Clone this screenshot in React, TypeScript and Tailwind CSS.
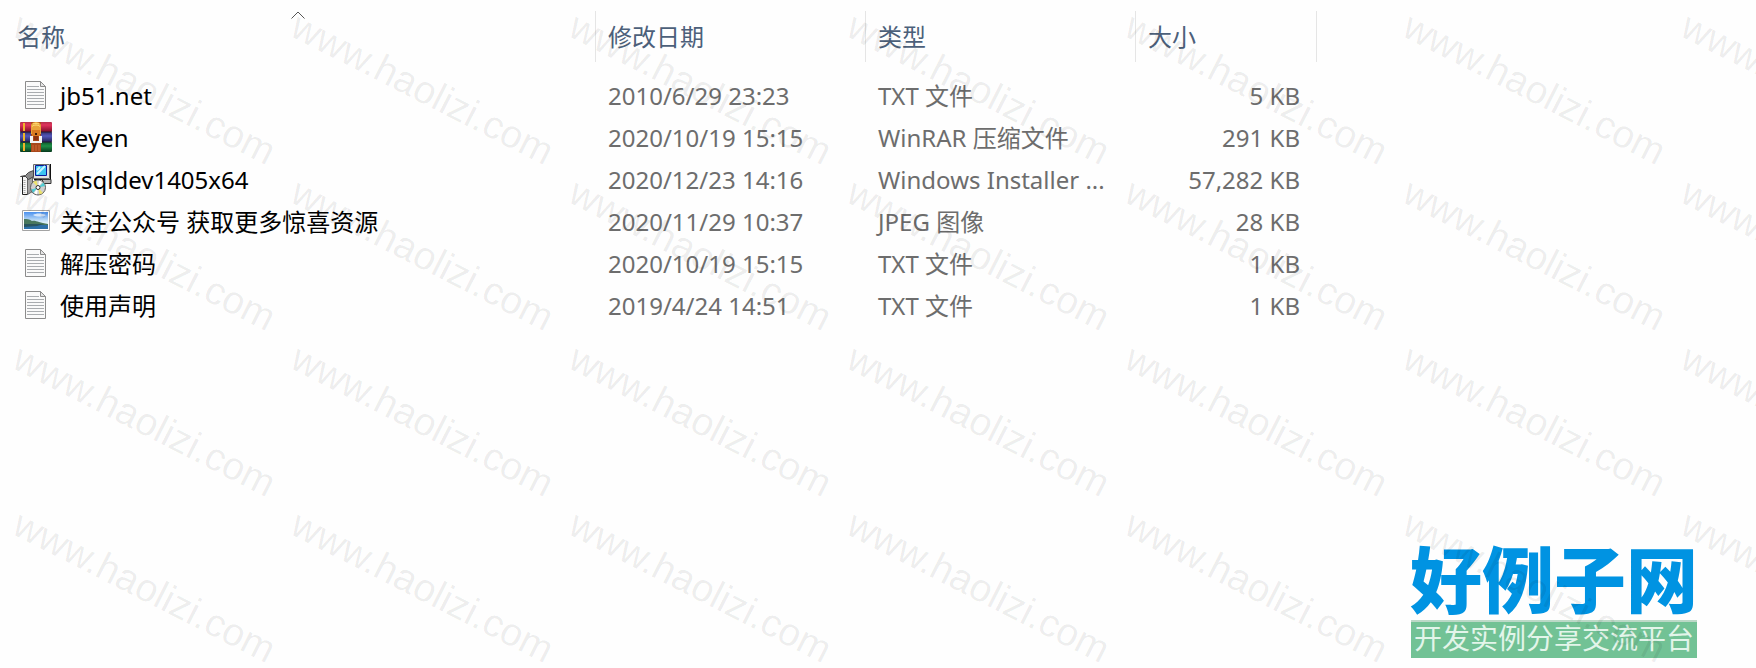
import type { ReactNode } from 'react';

type FileKind = 'text' | 'rar' | 'installer' | 'image';

interface FileItem {
  name: string;
  kind: FileKind;
  modified: string;
  type: string;
  size: string;
}

const files: FileItem[] = [
  { name: 'jb51.net', kind: 'text', modified: '2010/6/29 23:23', type: 'TXT 文件', size: '5 KB' },
  { name: 'Keyen', kind: 'rar', modified: '2020/10/19 15:15', type: 'WinRAR 压缩文件', size: '291 KB' },
  {
    name: 'plsqldev1405x64',
    kind: 'installer',
    modified: '2020/12/23 14:16',
    type: 'Windows Installer ...',
    size: '57,282 KB',
  },
  {
    name: '关注公众号 获取更多惊喜资源',
    kind: 'image',
    modified: '2020/11/29 10:37',
    type: 'JPEG 图像',
    size: '28 KB',
  },
  { name: '解压密码', kind: 'text', modified: '2020/10/19 15:15', type: 'TXT 文件', size: '1 KB' },
  { name: '使用声明', kind: 'text', modified: '2019/4/24 14:51', type: 'TXT 文件', size: '1 KB' },
];

const App = () => {
  return (
    <div className="relative flex min-h-screen flex-col overflow-hidden bg-[#fefefe] pt-[11px] font-['Noto_Sans','Noto_Sans_CJK_SC',sans-serif] text-2xl">
      <FileTable />
      <SiteLogo />
      <Watermark />
    </div>
  );
};

export default App;

const FileTable = () => {
  return (
    <table className="w-3/4 min-w-[1100px] table-fixed border-collapse">
      <colgroup>
        <col />
        <col className="w-[270px]" />
        <col className="w-[270px]" />
        <col className="w-[181px]" />
      </colgroup>
      <thead>
        <tr>
          <HeaderCell className="pl-[17px]" sorted>
            名称
          </HeaderCell>
          <HeaderCell className="pl-3">修改日期</HeaderCell>
          <HeaderCell className="pl-3">类型</HeaderCell>
          <HeaderCell className="pl-3">大小</HeaderCell>
        </tr>
      </thead>
      <tbody>
        {files.map((file) => (
          <tr key={file.name} className="h-[42px] whitespace-nowrap text-[#6d6d6d]">
            <td className="p-0 pl-5">
              <div className="flex items-center gap-2 text-black">
                <FileIcon kind={file.kind} />
                <span className="leading-8">{file.name}</span>
              </div>
            </td>
            <td className="p-0 pl-3">{file.modified}</td>
            <td className="p-0 pl-3">{file.type}</td>
            <td className="p-0 pr-[17px] text-right">{file.size}</td>
          </tr>
        ))}
      </tbody>
    </table>
  );
};

const HeaderCell = ({
  children,
  className = '',
  sorted,
}: {
  children: ReactNode;
  className?: string;
  sorted?: boolean;
}) => {
  return (
    <th className="p-0 pb-[13px] text-left font-normal" aria-sort={sorted ? 'ascending' : undefined}>
      <button
        type="button"
        className={`relative flex h-[51px] w-full items-center border-r border-[#e5e5e5] text-[#4c607a] ${className}`}
      >
        {children}
        {sorted && (
          <svg
            className="absolute inset-x-0 top-0 mx-auto h-2 w-4"
            viewBox="0 0 16 8"
            fill="none"
            stroke="#555"
            aria-hidden="true"
          >
            <path d="M1.5 7.5 8 1l6.5 6.5" />
          </svg>
        )}
      </button>
    </th>
  );
};

const FileIcon = ({ kind }: { kind: FileKind }) => {
  return (
    <svg className="size-8 shrink-0" viewBox="0 0 32 32" aria-hidden="true">
      {kind === 'text' && <TextFile />}
      {kind === 'rar' && <RarFile />}
      {kind === 'installer' && <InstallerFile />}
      {kind === 'image' && <ImageFile />}
    </svg>
  );
};

const TextFile = () => (
  <>
    <path d="M5.5 1.5h15l5 5v22h-20z" fill="#fafafa" stroke="#8c8c8c" />
    <path d="M20.5 1.5v5h5z" fill="#e4e4e4" stroke="#8c8c8c" />
    <path
      d="M7 6.5h12M7 9.5h17M7 12.5h17M7 15.5h17M7 18.5h17M7 21.5h17M7 24.5h17"
      stroke="#a9acaf"
    />
  </>
);

const RarFile = () => (
  <>
    <defs>
      <linearGradient id="rar-red" x2="0" y2="1">
        <stop offset="0" stopColor="#b3304a" />
        <stop offset=".3" stopColor="#e0335c" />
        <stop offset="1" stopColor="#7c0c28" />
      </linearGradient>
      <linearGradient id="rar-blue" x2="0" y2="1">
        <stop offset="0" stopColor="#35306f" />
        <stop offset=".4" stopColor="#5357ba" />
        <stop offset="1" stopColor="#262259" />
      </linearGradient>
      <linearGradient id="rar-green" x2="0" y2="1">
        <stop offset="0" stopColor="#0b5a2b" />
        <stop offset=".4" stopColor="#1f8e47" />
        <stop offset="1" stopColor="#07391d" />
      </linearGradient>
    </defs>
    <rect width="32" height="10" rx="1" fill="url(#rar-red)" />
    <rect y="10" width="32" height="10" rx="1" fill="url(#rar-blue)" />
    <rect y="20" width="32" height="10" rx="1" fill="url(#rar-green)" />
    <path d="M0 10h32M0 20h32" stroke="#241b35" />
    <path d="M4 1v8M4 11v8M4 21v8" stroke="#f0b429" strokeWidth="2" />
    <path d="M11 0h10v30H11z" fill="#a8481b" />
    <path d="M11 3c1-4 9-4 10 0v9H11z" fill="#e8a33a" />
    <path d="M12 4.5c2-2 6-2 8 0M13 2c2-1 4-1 6 0" stroke="#ffe07a" fill="none" />
    <path d="M12 8h8v6h-8z" fill="#d97a22" />
    <path d="M15 11h2v2h-2z" fill="#3b1a0b" />
    <path d="M10 14h3v5h6v-5h3v7H10z" fill="#f4f4f4" />
    <path d="M14 14h4v4h-4z" fill="#8c3210" />
    <path d="M13 23v6M16 23v6M19 23v6" stroke="#cf6a35" />
  </>
);

const InstallerFile = () => (
  <>
    <path d="M13.5.5h16v14h-16z" fill="#e2e2e2" stroke="#6b6b6b" />
    <path d="M30.5 0v15.5H14" fill="none" stroke="#111" />
    <path d="M15.5 1.5h11v10h-11z" fill="#3cc4f2" stroke="#0a1a9a" />
    <path d="m17 10 8-8M17 6l3-3" stroke="#c5f4ff" strokeWidth="2" />
    <path d="M22 15.5h9v4h-7z" fill="#b5b5b5" stroke="#333" />
    <path d="M2.5 12.5h5v18h-5z" fill="#f4f4f4" stroke="#222" />
    <path d="M7.5 12.5h5v15l-5 3z" fill="#a6a6a6" stroke="#666" />
    <path d="m.5 12.5 5-1 3-3 5-2v6l-5 3-3-3z" fill="#8a8a8a" stroke="#444" />
    <path d="M4.5 16v13" stroke="#aaa" strokeWidth="2" strokeDasharray="1 1" />
    <circle cx="18" cy="23.5" r="7.5" fill="#d0d0d0" stroke="#5b5b5b" />
    <path d="m18 23.5-5-5.5 3.5-1.5zM18 23.5l5 5.5-3.5 1.5z" fill="#ece36b" />
    <path d="m18 23.5 5.5-5 1.5 3.5zM18 23.5l-5 5.5-1.5-3.5z" fill="#51cdd3" />
    <path d="m18 23.5 1-7 3 1.5zM18 23.5l-1 7-3-1.5z" fill="#fff" />
    <circle cx="18" cy="23.5" r="2" fill="#fff" stroke="#333" />
  </>
);

const ImageFile = () => (
  <>
    <defs>
      <linearGradient id="photo-sky" x2="0" y2="1">
        <stop offset="0" stopColor="#4a90ee" />
        <stop offset=".6" stopColor="#d9edf8" />
        <stop offset="1" stopColor="#eaf5fb" />
      </linearGradient>
    </defs>
    <path d="M2.5 4.5h27v20h-27z" fill="#fff" stroke="#a3a3a3" />
    <path d="M4 6h24v17H4z" fill="url(#photo-sky)" />
    <path d="M4 18h24v5H4z" fill="#2d70a8" />
    <path d="M4 13c3 0 5 0 8 2 4-1 7 2 16 3v1H4z" fill="#48775d" />
    <path d="M4 18h20l-7 2-13 1z" fill="#29545d" />
    <path d="M13 9c3-2 8-2 13 0-2 2-10 2-13 0z" fill="#fff" opacity=".7" />
  </>
);

const SiteLogo = () => {
  return (
    <div className="mt-auto mr-[59px] mb-[10px] flex w-[286px] flex-col self-end text-center whitespace-nowrap">
      <strong className="flex h-20 items-center justify-center pb-0.5 text-[72px] leading-none font-black text-[#0093e2]">
        好例子网
      </strong>
      <span className="border-t-2 border-[#bcd9c7] bg-[#72c295] pb-1 text-[28px] leading-8 text-[#e3f5ea]">
        开发实例分享交流平台
      </span>
    </div>
  );
};

const Watermark = () => {
  const marks = Array.from({ length: 28 }, (_, i) => i);

  return (
    <div
      className="pointer-events-none absolute inset-0 grid auto-rows-[166px] grid-cols-[repeat(7,278px)] overflow-hidden pt-0.5 font-['Liberation_Sans',sans-serif] text-[39px] leading-[48px] text-black/7 select-none"
      aria-hidden="true"
    >
      {marks.map((i) => (
        <div key={i} className="pl-[27px]">
          <span className="block w-max origin-top-left rotate-27">www.haolizi.com</span>
        </div>
      ))}
    </div>
  );
};
